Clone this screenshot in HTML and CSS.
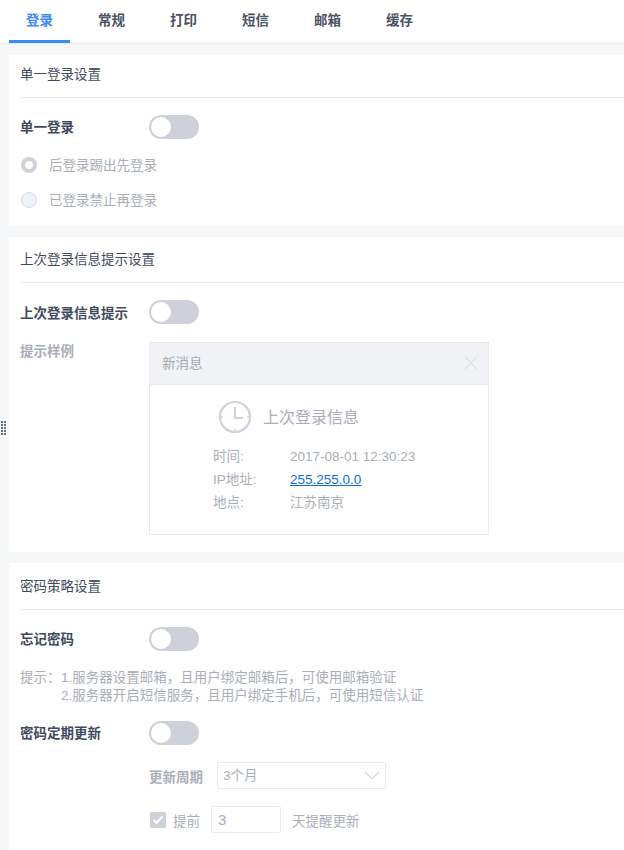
FILE: index.html
```html
<!DOCTYPE html>
<html lang="zh-CN">
<head>
<meta charset="utf-8">
<title>设置</title>
<link rel="stylesheet" href="styles.css">
</head>
<body>
<div class="grip" aria-hidden="true"></div>
<nav class="tabs">
  <a class="tab active">登录</a>
  <a class="tab">常规</a>
  <a class="tab">打印</a>
  <a class="tab">短信</a>
  <a class="tab">邮箱</a>
  <a class="tab">缓存</a>
</nav>
<main class="content">
  <section class="card card-first">
    <h2 class="card-title title-first">单一登录设置</h2>
    <div class="row row-first">
      <span class="label">单一登录</span>
      <span class="switch"></span>
    </div>
    <div class="radio-row radio-one"><span class="radio checked"></span><span class="radio-text">后登录踢出先登录</span></div>
    <div class="radio-row radio-two"><span class="radio"></span><span class="radio-text">已登录禁止再登录</span></div>
  </section>

  <section class="card card-second">
    <h2 class="card-title">上次登录信息提示设置</h2>
    <div class="row row-second">
      <span class="label label-low">上次登录信息提示</span>
      <span class="switch"></span>
    </div>
    <div class="sample">
      <span class="label label-muted">提示样例</span>
      <div class="notice">
        <div class="notice-head">
          <span class="notice-name">新消息</span>
          <svg class="notice-close" width="14" height="14" viewBox="0 0 14 14"><path d="M1 1l12 12M13 1L1 13" stroke="#dfe1e7" stroke-width="1.4" fill="none"/></svg>
        </div>
        <div class="notice-body">
          <div class="notice-title">
            <svg width="34" height="34" viewBox="0 0 34 34" fill="none" stroke="#ced2da"><circle cx="17" cy="17" r="15" stroke-width="2.2"/><path d="M17 7v11h8" stroke-width="2"/><path d="M17 29v2M3 17h2M29 17h2" stroke-width="1.5"/></svg>
            <span class="notice-heading">上次登录信息</span>
          </div>
          <dl class="info">
            <dt>时间:</dt><dd>2017-08-01 12:30:23</dd>
            <dt>IP地址:</dt><dd><a class="ip">255.255.0.0</a></dd>
            <dt>地点:</dt><dd>江苏南京</dd>
          </dl>
        </div>
      </div>
    </div>
  </section>

  <section class="card card-third">
    <h2 class="card-title title-third">密码策略设置</h2>
    <div class="row row-third">
      <span class="label">忘记密码</span>
      <span class="switch"></span>
    </div>
    <div class="hint">
      <span>提示：</span>
      <div>
        <div>1.服务器设置邮箱，且用户绑定邮箱后，可使用邮箱验证</div>
        <div>2.服务器开启短信服务，且用户绑定手机后，可使用短信认证</div>
      </div>
    </div>
    <div class="row row-fourth">
      <span class="label">密码定期更新</span>
      <span class="switch"></span>
    </div>
    <div class="period">
      <span class="period-label">更新周期</span>
      <div class="select">
        <span class="select-value">3个月</span>
        <svg width="16" height="9" viewBox="0 0 16 9" fill="none"><path d="M1 1l7 7 7-7" stroke="#d5d8df" stroke-width="1.2"/></svg>
      </div>
    </div>
    <div class="remind">
      <span class="check"><svg width="12" height="10" viewBox="0 0 12 10" fill="none"><path d="M1.5 5l3 3 6-6.5" stroke="#fff" stroke-width="2"/></svg></span>
      <span class="remind-pre">提前</span>
      <span class="num">3</span>
      <span>天提醒更新</span>
    </div>
  </section>
</main>
</body>
</html>
```
FILE: styles.css
```css
* { box-sizing: border-box; }
html, body { margin: 0; height: 850px; overflow: hidden; }
body {
  position: relative;
  background: #f6f7f9;
  font-family: "Liberation Sans", "Noto Sans CJK SC", sans-serif;
  font-size: 13.5px;
  color: #a9aeb9;
}
.grip {
  position: absolute;
  left: 1px;
  top: 421px;
  width: 6px;
  height: 14px;
  background: radial-gradient(circle at 1px 1px, #666c78 1px, transparent 1px) 0 0 / 3px 3px;
}
.tabs {
  display: flex;
  height: 44px;
  padding-left: 9px;
  background: #fff;
  border-bottom: 1px solid #e6e8ec;
}
.tab {
  width: 61px;
  margin-right: 11px;
  height: 43px;
  padding-top: 11px;
  text-align: center;
  font-weight: 700;
  color: #4a5264;
  line-height: 19px;
}
.tab.active {
  color: #3a8af5;
  border-bottom: 3px solid #3a8af5;
}
.content {
  display: flex;
  flex-direction: column;
  gap: 11px;
  padding: 11px 0 0 9px;
}
.card { background: #fff; padding-left: 11px; }
.card-first { height: 171px; }
.card-second { height: 315px; }
.card-third { height: 290px; }
.card-title {
  margin: 0;
  height: 46px;
  padding-top: 13px;
  font-size: 13.5px;
  line-height: 20px;
  font-weight: 400;
  color: #3f4a5e;
  border-bottom: 1px solid #e6e8ec;
}
.card-title.title-first { height: 43px; padding-top: 10px; }
.card-title.title-third { height: 47px; padding-top: 14px; }
.row { display: flex; align-items: center; }
.row-first { margin-top: 17px; }
.row-second { margin-top: 17px; }
.row-third { margin-top: 17px; }
.row-fourth { margin-top: 16px; }
.label {
  width: 129px;
  flex: none;
  padding-top: 2px;
  font-weight: 700;
  color: #3f4a5e;
  line-height: 20px;
}
.label.label-low { padding-top: 3px; }
.label-muted { color: #a9aeb9; padding-top: 0; }
.switch {
  position: relative;
  display: block;
  width: 50px;
  height: 24px;
  border-radius: 12px;
  background: #ced1d9;
}
.switch::after {
  content: "";
  position: absolute;
  left: 2px;
  top: 2px;
  width: 20px;
  height: 20px;
  border-radius: 50%;
  background: #fff;
}
.radio-row {
  display: flex;
  align-items: center;
  gap: 12px;
  height: 20px;
  padding-left: 1px;
}
.radio-text { margin-top: -2px; }
.radio-one { margin-top: 16px; }
.radio-two { margin-top: 15px; }
.radio {
  width: 16px;
  height: 16px;
  flex: none;
  border-radius: 50%;
  background: #eef1f7;
  border: 1px solid #d5d9e2;
}
.radio.checked { background: #fff; border: 4.5px solid #ced1d9; }
.sample { display: flex; margin-top: 18px; }
.notice {
  width: 340px;
  height: 193px;
  border: 1px solid #e8eaee;
  background: #fff;
}
.notice-head {
  display: flex;
  align-items: center;
  justify-content: space-between;
  height: 42px;
  padding: 0 10px 0 12px;
  background: #f1f2f6;
  border-bottom: 1px solid #e8eaee;
  color: #a3a8b3;
}
.notice-name { margin-top: -3px; }
.notice-close { margin-top: -1px; }
.notice-title {
  display: flex;
  align-items: center;
  gap: 11px;
  margin: 15px 0 0 68px;
  font-size: 16px;
  color: #a9aeb9;
}
.notice-heading { margin-top: -2px; }
.info {
  display: grid;
  grid-template-columns: 77px 1fr;
  grid-auto-rows: 23px;
  align-items: center;
  margin: 11px 0 0 63px;
}
.info dd, .info dt { margin: 0; line-height: 23px; }
.ip { color: #0d6fd6; text-decoration: underline; }
.hint {
  display: flex;
  margin-top: 18px;
  line-height: 18px;
}
.hint > span { width: 41px; flex: none; }
.period {
  display: flex;
  align-items: center;
  height: 27px;
  margin-top: 17px;
  padding-left: 129px;
}
.period-label { width: 68px; font-weight: 700; color: #a9aeb9; }
.select {
  display: flex;
  align-items: center;
  justify-content: space-between;
  width: 169px;
  height: 27px;
  padding: 0 5px 0 5px;
  border: 1px solid #e8eaee;
  border-radius: 2px;
}
.select-value { margin-top: -3px; }
.remind {
  display: flex;
  align-items: center;
  height: 27px;
  margin-top: 17px;
  padding-left: 130px;
}
.check {
  display: flex;
  align-items: center;
  justify-content: center;
  width: 16px;
  height: 16px;
  border-radius: 2px;
  background: #ced1d9;
}
.remind-pre { margin-left: 7px; width: 38px; }
.num {
  width: 70px;
  height: 27px;
  margin-right: 11px;
  padding-left: 6px;
  font-size: 15px;
  line-height: 25px;
  border: 1px solid #e8eaee;
  border-radius: 2px;
}
```
